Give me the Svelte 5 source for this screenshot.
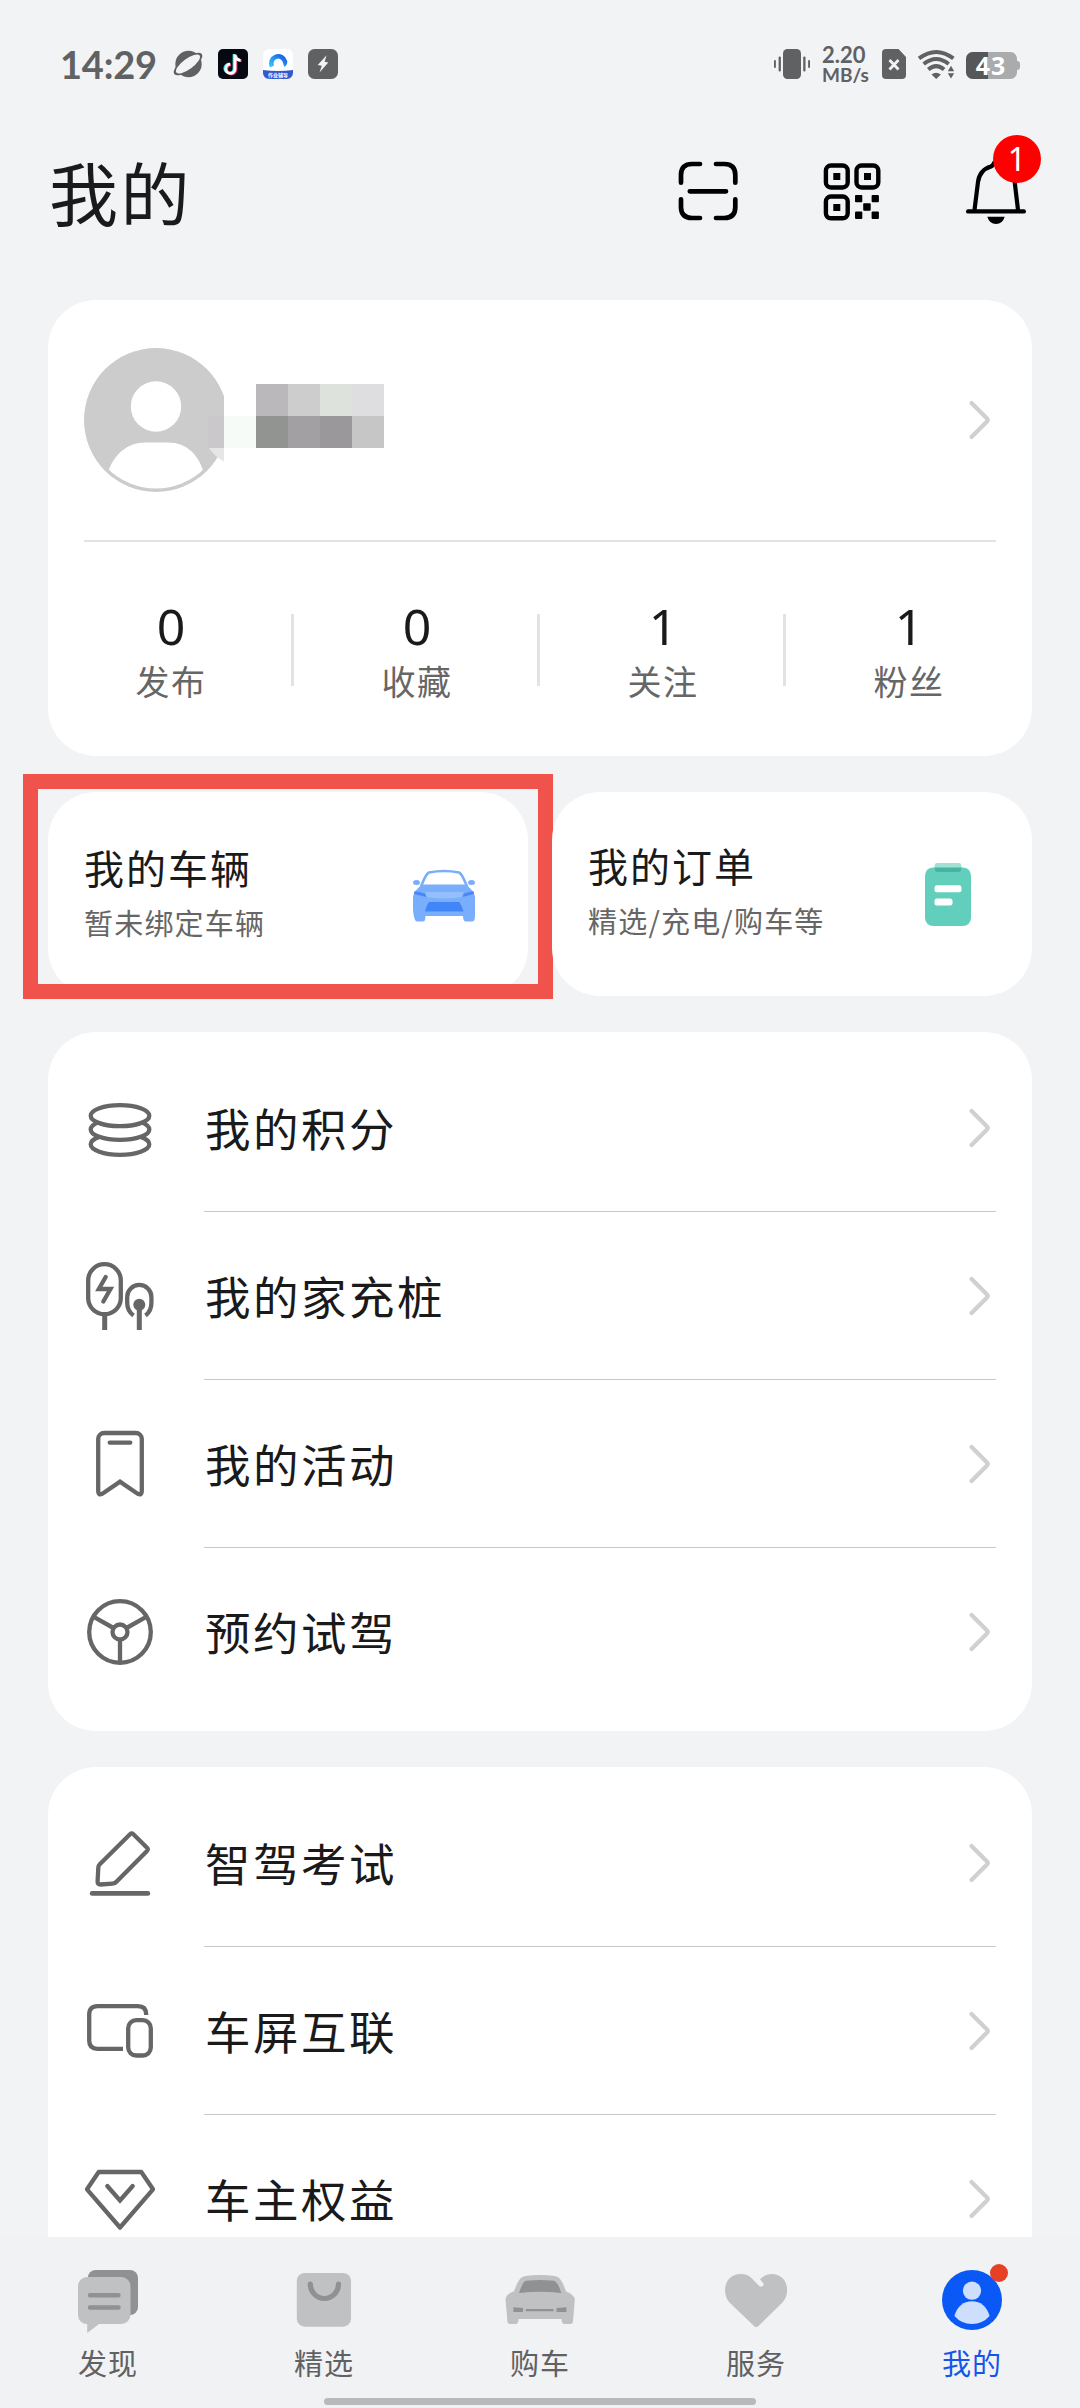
<script>
  const stats = [
    { value: '0', label: '发布' },
    { value: '0', label: '收藏' },
    { value: '1', label: '关注' },
    { value: '1', label: '粉丝' },
  ];

  const groups = [
    [
      { icon: 'coins', label: '我的积分' },
      { icon: 'charger', label: '我的家充桩' },
      { icon: 'bookmark', label: '我的活动' },
      { icon: 'wheel', label: '预约试驾' },
    ],
    [
      { icon: 'edit', label: '智驾考试' },
      { icon: 'screens', label: '车屏互联' },
      { icon: 'diamond', label: '车主权益' },
    ],
  ];

  const tabs = [
    { icon: 'discover', label: '发现' },
    { icon: 'shop', label: '精选' },
    { icon: 'car', label: '购车' },
    { icon: 'heart', label: '服务' },
    { icon: 'me', label: '我的', active: true },
  ];
</script>

{#snippet chevron()}
  <svg class="chevron" viewBox="0 0 24 42" width="24" height="42">
    <path d="M4.5 4 L20 19.6 Q21.4 21 20 22.4 L4.5 38" />
  </svg>
{/snippet}

<div class="app">
  <div class="status">
    <span class="time">14:29</span>
    <div class="notes">
      <svg viewBox="0 0 30 30" width="30" height="30">
        <circle cx="15.5" cy="15" r="13.2" fill="#5f6163" />
        <ellipse cx="15" cy="15" rx="17" ry="6.6" transform="rotate(-36 15 15)" fill="#5f6163" />
        <ellipse cx="15" cy="15" rx="14.4" ry="5.2" transform="rotate(-36 15 15)" fill="#f1f3f5" />
      </svg>
      <svg viewBox="0 0 30 30" width="30" height="30">
        <rect width="30" height="30" rx="5" fill="#060812" />
        <g fill="none" stroke-width="2.8">
          <path d="M16 5 V19.5 A4.6 4.6 0 1 1 11.4 14.8 M16 5.5 Q17 10.5 21.6 10.8" stroke="#25e8e2" />
          <path d="M18 6.2 V20.6 A4.6 4.6 0 1 1 13 15.8 M18 6.7 Q19 11.5 23.6 11.8" stroke="#f0275a" />
          <path d="M17 5.5 V20 A4.6 4.6 0 1 1 12.2 15.2 M17 6 Q18 11 22.6 11.3" stroke="#fff" />
        </g>
      </svg>
      <svg viewBox="0 0 30 30" width="30" height="30">
        <defs>
          <linearGradient id="ring" x1="0" y1="1" x2="1" y2="0">
            <stop offset="0" stop-color="#35c5fb" />
            <stop offset="1" stop-color="#165fe8" />
          </linearGradient>
        </defs>
        <rect width="30" height="30" rx="6" fill="#fff" />
        <path d="M9 17.5 A7 7 0 1 1 22 12.5 Q22 15 20.5 15.5" fill="none" stroke="url(#ring)" stroke-width="4.6" />
        <path d="M0 21 Q15 23 30 21 V24 a6 6 0 0 1 -6 6 H6 a6 6 0 0 1 -6 -6 Z" fill="#3557cf" />
        <text x="15" y="28.4" text-anchor="middle" class="tiny">作业辅导</text>
      </svg>
      <svg viewBox="0 0 30 30" width="30" height="30">
        <rect width="30" height="30" rx="6.5" fill="#5f6163" />
        <path d="M18.6 6.2 L9.7 16 L13.8 16.8 L11.5 23.5 L20.3 13.6 L16.6 12.8 Z" fill="#f1f3f5" />
      </svg>
    </div>
    <div class="signals">
      <svg viewBox="0 0 36 30" width="36" height="30" fill="#5f6163">
        <rect x="9" width="18" height="30" rx="4.5" />
        <rect x="0" y="11" width="1.9" height="8" rx=".9" /><rect x="4.6" y="7.5" width="2.3" height="15" rx="1" />
        <rect x="29.2" y="7.5" width="2.3" height="15" rx="1" /><rect x="34.1" y="11" width="1.9" height="8" rx=".9" />
      </svg>
      <div class="speed"><span class="rate">2.20</span><span class="unit">MB/s</span></div>
      <svg class="sim" viewBox="0 0 24 30" width="24" height="30">
        <path d="M4 0 H16.5 L24 8 V26 a4 4 0 0 1 -4 4 H4 a4 4 0 0 1 -4 -4 V4 a4 4 0 0 1 4 -4Z" fill="#5f6163" />
        <path d="M7.5 11 L16.5 20.5 M16.5 11 L7.5 20.5" stroke="#f1f3f5" stroke-width="2.8" />
      </svg>
      <svg class="wifi" viewBox="0 0 37 30" width="37" height="30">
        <g fill="none" stroke="#5f6163" stroke-width="4">
          <path d="M1 9.4 Q18.2 -3.5 35.4 9.400" />
          <path d="M5.7 15 Q18.2 5 30.7 15" />
          <path d="M10.3 20.5 Q18.2 13.8 26.1 20.5" />
        </g>
        <path d="M13.5 25.4 Q18 22.2 22.9 25.4 L18.2 30 Z M29.8 22.3 L33 16.8 L36.2 22.3 Z M29.8 24.3 L33 29.6 L36.2 24.3 Z" fill="#5f6163" />
      </svg>
      <div class="battery">
        <svg viewBox="0 0 54 27" width="54" height="27">
          <path d="M22 0 H44.5 a6.5 6.5 0 0 1 6.5 6.5 V9 q3 0 3 3 v3 q0 3 -3 3 V20.500 a6.500 6.500 0 0 1 -6.500 6.500 H22 Z" fill="#a9abad" />
          <path d="M6.500 0 H22 V27 H6.500 a6.500 6.500 0 0 1 -6.500 -6.500 V6.500 a6.500 6.500 0 0 1 6.500 -6.500Z" fill="#555759" />
        </svg>
        <span class="level">43</span>
      </div>
    </div>
  </div>

  <header>
    <h1>我的</h1>
    <div class="actions">
      <svg viewBox="0 0 72 72" width="72" height="72" class="line">
        <path d="M9 26.700 V19 Q9 8 20 8 H28 M44 8 H52.300 Q63.300 8 63.300 19 V26.700 M63.300 43.300 V51 Q63.300 62 52.300 62 H44 M28 62 H20 Q9 62 9 51 V43.300 M17.800 35.300 H54" />
      </svg>
      <svg viewBox="0 0 72 72" width="72" height="72">
        <g fill="none" stroke="#000" stroke-width="4.400">
          <rect x="9.900" y="9.500" width="21.800" height="22" rx="5" />
          <rect x="40.500" y="9.500" width="21.800" height="22" rx="5" />
          <rect x="9.900" y="40.500" width="21.800" height="21.800" rx="5" />
        </g>
        <rect x="17.300" y="17" width="7" height="7" /><rect x="48" y="17" width="7" height="7" /><rect x="17.300" y="48" width="7" height="7" />
        <rect x="39" y="39" width="7.300" height="7.300" rx="1" /><rect x="55.600" y="39" width="7.300" height="7.300" rx="1" />
        <rect x="47.200" y="47.200" width="7.500" height="7.500" rx="1" />
        <rect x="39" y="55.500" width="7.300" height="7.500" rx="1" /><rect x="55.600" y="55.500" width="7.300" height="7.500" rx="1" />
      </svg>
      <div class="bell">
        <svg viewBox="0 0 72 72" width="72" height="72">
          <path d="M14.500 54 L18 26 Q19.500 14 31 10.500 Q33 9.500 34 7 Q36 4 38.500 7 Q40 9.500 42 10.500 Q53 14 54.700 26 L58 54" fill="none" stroke="#000" stroke-width="4.200" />
          <path d="M8.200 55.400 H63.800" stroke="#000" stroke-width="4.400" stroke-linecap="round" />
          <path d="M27.300 60.700 H44.700 Q42.500 68 36 68 Q29.500 68 27.300 60.700Z" />
        </svg>
        <span class="count">1</span>
      </div>
    </div>
  </header>

  <main>
    <section class="card profile">
      <div class="user">
        <svg class="avatar" viewBox="0 0 144 144" width="144" height="144">
          <defs>
            <clipPath id="face"><rect width="140" height="144" /></clipPath>
            <clipPath id="inner"><circle cx="72" cy="72" r="68.500" /></clipPath>
          </defs>
          <g clip-path="url(#face)">
            <circle cx="72" cy="72" r="72" fill="#ccc" />
            <rect x="124" y="68" width="16" height="32" fill="#cbc8cc" />
            <circle cx="72" cy="58.500" r="25.200" fill="#fff" />
            <path d="M24 124 C30 106 44 94.500 61 94.500 H84 C102 94.500 114 106 119.500 124 L110 144 H34Z" fill="#fff" clip-path="url(#inner)" />
            <path d="M125 100 H140 V113.500 Q131 109 125 100Z" fill="#e6e6e6" />
          </g>
        </svg>
        <!-- pixelated user name -->
        <svg class="mosaic" viewBox="0 0 160 64" width="160" height="64" shape-rendering="crispEdges">
          <rect x="0" y="32" width="32" height="32" fill="#f6fbf8" />
          <rect x="32" y="0" width="32" height="32" fill="#bab8bb" />
          <rect x="64" y="0" width="32" height="32" fill="#cecdce" />
          <rect x="96" y="0" width="32" height="32" fill="#dde2dc" />
          <rect x="128" y="0" width="32" height="32" fill="#dedddf" />
          <rect x="32" y="32" width="32" height="32" fill="#929491" />
          <rect x="64" y="32" width="32" height="32" fill="#a3a0a4" />
          <rect x="96" y="32" width="32" height="32" fill="#9b989b" />
          <rect x="128" y="32" width="32" height="32" fill="#c6c6c6" />
        </svg>
        {@render chevron()}
      </div>
      <div class="stats">
        {#each stats as s}
          <div class="stat">
            <span class="num">{s.value}</span>
            <span class="name">{s.label}</span>
          </div>
        {/each}
      </div>
    </section>

    <div class="pair">
      <section class="card tile first">
        <div class="words">
          <strong>我的车辆</strong>
          <small>暂未绑定车辆</small>
        </div>
        <svg class="vehicle" viewBox="0 0 62 52" width="62" height="52">
          <path d="M8 16.500 Q13 3.500 16 2.500 Q31 -0.500 46 2.500 Q49 3.500 54 16.500" fill="none" stroke="#7aaefb" stroke-width="2.600" />
          <ellipse cx="3.500" cy="12.500" rx="3.500" ry="2.500" fill="#7aaefb" /><ellipse cx="58.500" cy="12.500" rx="3.500" ry="2.500" fill="#7aaefb" />
          <path d="M9 14.500 H53 Q62 22 62 27 V46 Q62 51.500 59 51.500 H53 Q50 51.500 50 46 H12.500 Q12.500 51.500 10 51.500 H4 Q1 51.500 0 40 V27 Q0 22 9 14.500Z" fill="#79aefc" />
          <path d="M12 22 H50.500 L49 27 Q31 30 13.500 27Z" fill="#93bffd" />
          <path d="M1.500 21 L12 23.500 L13.500 27 L1 24Z M60.500 21 L51 23.500 L49.500 27 L61 24Z" fill="#4a86f5" />
          <path d="M16 32 H46.500 Q49 36 50.500 41.500 H12 Q13.500 35 16 32Z" fill="#4285f7" />
        </svg>
        <div class="frame"></div>
      </section>
      <section class="card tile second">
        <div class="words">
          <strong>我的订单</strong>
          <small>精选/充电/购车等</small>
        </div>
        <svg viewBox="0 0 46 63" width="46" height="63">
          <rect y="4.500" width="46" height="58.500" rx="8" fill="#62cfbc" />
          <rect x="9.500" y="0" width="27" height="9" rx="3" fill="#a3e0d4" />
          <path d="M9.500 4.500 H36.500 V6 a3 3 0 0 1 -3 3 H12.500 a3 3 0 0 1 -3 -3Z" fill="#45b5a1" />
          <rect x="9.500" y="22.300" width="27" height="7" rx="2.500" fill="#fff" />
          <rect x="9.500" y="35.500" width="18" height="7" rx="2.500" fill="#fff" />
        </svg>
      </section>
    </div>

    {#each groups as rows}
      <section class="card list">
        {#each rows as row}
          <div class="row">
            <svg class="glyph" viewBox="0 0 72 72" width="72" height="72">
              {#if row.icon === 'coins'}
                <g fill="#fff">
                  <ellipse cx="36" cy="52.300" rx="29.300" ry="10.500" />
                  <ellipse cx="36" cy="37.400" rx="29.300" ry="10.500" />
                  <ellipse cx="36" cy="23.700" rx="29.300" ry="10.500" />
                </g>
              {:else if row.icon === 'charger'}
                <rect x="4.200" y="4.200" width="32.600" height="50" rx="16.300" />
                <path d="M21.700 17 L14.800 29 H26.500 L19.300 41.500" stroke-linecap="round" />
                <path d="M20.700 55 V70 M55.300 45 V70" stroke-width="5" />
                <path d="M49.500 55.500 C45.500 52.500 43.200 48 43.200 43 V37 A12.100 12.100 0 0 1 67.400 37 V43 C67.400 48 65.500 52.500 61.500 55.500" />
                <circle cx="55.300" cy="44.800" r="6" fill="#666" stroke="none" />
              {:else if row.icon === 'bookmark'}
                <path d="M14.200 11 a6 6 0 0 1 6 -6 H51.800 a6 6 0 0 1 6 6 V63 q0 5 -4.200 2.700 L36 53.700 L18.400 65.700 q-4.200 2.300 -4.200 -2.700Z" />
                <path d="M25.700 14.700 H46.300" stroke-linecap="round" />
              {:else if row.icon === 'wheel'}
                <circle cx="36" cy="36" r="30.800" />
                <circle cx="36" cy="36" r="7.500" />
                <path d="M36 43.500 V66 M9.300 20.700 L29.500 32 M62.700 20.700 L42.500 32" />
              {:else if row.icon === 'edit'}
                <path d="M46 7.300 Q47.700 5.700 49.400 7.300 L63 20.700 Q64.500 22.300 63 23.900 L32.700 54.500 Q31 56.500 28.500 56.700 L16.500 57.500 Q13.600 57.500 13.600 54.500 L14.300 40.500 Q14.300 38.700 16 37Z" />
                <path d="M8.200 66.400 H63.800" stroke-width="4.800" stroke-linecap="round" />
              {:else if row.icon === 'screens'}
                <path d="M62.200 20 V19.500 q0 -8.300 -8.300 -8.300 H13.500 q-8.300 0 -8.300 8.300 V45.600 q0 8.300 8.300 8.300 H39" />
                <rect x="44.200" y="25.200" width="22.600" height="35.300" rx="8" />
              {:else}
                <path d="M14.700 9 H57.300 L69 26.300 L36 64.500 L3 26.300Z" stroke-linejoin="round" />
                <path d="M23.300 23 L36 37.500 L48.700 23" stroke-linecap="round" />
              {/if}
            </svg>
            <div class="body">
              <span>{row.label}</span>
              {@render chevron()}
            </div>
          </div>
        {/each}
      </section>
    {/each}
  </main>

  <nav>
    {#each tabs as tab}
      <div class="tab" class:active={tab.active}>
        <svg viewBox="0 0 72 72" width="72" height="72">
          {#if tab.icon === 'discover'}
            <rect x="15.800" y="6" width="50.200" height="45" rx="8" fill="#8f9193" />
            <path d="M15 13 H49.500 a9 9 0 0 1 9 9 V51 a9 9 0 0 1 -9 9 H27 L15.200 69 V60 a9 9 0 0 1 -9.200 -9 V22 a9 9 0 0 1 9 -9Z" fill="#bfc1c3" />
            <path d="M18 31.300 H46.500 M18 43.500 H46.500" stroke="#8f9193" stroke-width="4.400" stroke-linecap="round" />
          {:else if tab.icon === 'shop'}
            <rect x="8.800" y="9" width="54.200" height="53.700" rx="8" fill="#bfc1c3" />
            <path d="M22.300 20 a14.100 14.500 0 0 0 28.200 0" fill="none" stroke="#8f9193" stroke-width="5.200" stroke-linecap="round" />
          {:else if tab.icon === 'car'}
            <path d="M10 27.300 Q14 16 17.500 13.500 Q20 11 36 11 Q52 11 54.500 13.500 Q58 16 62 27.300 Q70.800 31 70.800 36 L69 57 Q69 60 66.500 60 H60.500 Q57.500 60 57.500 55 H14.600 Q14.600 60 11.500 60 H6 Q3.500 60 3.400 57 L1.500 36 Q1.500 30 10 27.300Z" fill="#bfc1c3" />
            <path d="M15 29 Q18 20 20.500 17.500 Q22 16 36 16 Q50 16 51.500 17.500 Q54.500 20 57.300 29 Q36 26.500 15 29Z" fill="#8f9193" />
            <path d="M9.400 43.300 L19 44 V48 H9.400Z M62.400 43.300 L52.500 44 V48 H62.400Z M21.800 45 H49.500 V47.300 H21.800Z" fill="#8f9193" />
          {:else if tab.icon === 'heart'}
            <path d="M33.500 61.500 L9.500 38.500 C1.500 30 3.800 10 20.800 10 C25.500 10 29 11.500 31.500 14 L39 21.800 C41.500 24.300 45.300 21 43 18.700 L40 15.500 C43 12 47 10 51.500 10 C68 10 71 29 62.500 38.500 L39 61.500 Q36.200 64.500 33.500 61.500Z" fill="#bfc1c3" />
          {:else}
            <circle cx="36" cy="36" r="30" fill="#0a59f7" />
            <circle cx="36" cy="26.700" r="9.100" fill="#cedefd" />
            <path d="M18.400 52 Q23 37.300 36 37.300 Q49 37.300 53.600 52 Q46.500 60 36 60 Q25.500 60 18.400 52Z" fill="#cedefd" />
          {/if}
        </svg>
        {#if tab.active}<i class="dot"></i>{/if}
        <span>{tab.label}</span>
      </div>
    {/each}
    <div class="home"></div>
  </nav>
</div>

<style>
  :global(body) { background: #f1f3f5; }
  .app {
    width: 1080px; height: 2408px; overflow: hidden; position: relative;
    display: flex; flex-direction: column; background: #f1f3f5; color: #1a1a1a;
    font-family: 'Noto Sans CJK SC', sans-serif;
  }
  svg { display: block; flex: none; overflow: visible; }

  .status { height: 128px; flex: none; display: flex; align-items: center; padding: 0 60px; box-sizing: border-box; color: #5f6163; }
  .time { font: 700 38px/40px Lato, sans-serif; width: 113px; letter-spacing: -.2px; }
  .notes { display: flex; gap: 15px; }
  .tiny { font-size: 5px; fill: #fff; font-weight: 700; }
  .signals { display: flex; align-items: center; margin-left: auto; }
  .speed { display: flex; flex-direction: column; margin-left: 12px; width: 60px; font-family: Lato, sans-serif; font-weight: 700; }
  .rate { font-size: 22px; line-height: 21px; }
  .unit { font-size: 19px; line-height: 19px; }
  .wifi { margin-left: 12px; }
  .battery { margin-left: 11px; display: grid; align-items: center; padding-top: 3px; }
  .battery svg, .level { grid-area: 1 / 1; }
  .level { width: 50px; text-align: center; color: #fff; font: 700 25px/27px 'Noto Sans', sans-serif; letter-spacing: 1px; }

  header { height: 128px; flex: none; display: flex; align-items: center; justify-content: space-between; padding: 0 48px 0 49px; }
  h1 { margin: -3px 0 0; font-size: 69px; font-weight: 400; line-height: 80px; letter-spacing: 2.500px; }
  .actions { display: flex; gap: 72px; }
  .line { fill: none; stroke: #000; stroke-width: 4.700; stroke-linecap: round; }
  .bell { position: relative; }
  .count {
    position: absolute; left: 33px; top: -21px; width: 48px; height: 48px; border-radius: 50%;
    background: #f00; color: #fff; text-align: center; font: 400 32px/48px 'Noto Sans', sans-serif;
  }

  main { flex: 1; min-height: 0; overflow: hidden; padding: 44px 48px 0; display: flex; flex-direction: column; gap: 36px; }
  .card { background: #fff; border-radius: 48px; flex: none; }

  .profile { height: 456px; }
  .user { margin: 0 36px; height: 240px; border-bottom: 2px solid #e3e3e3; display: flex; align-items: center; }
  .mosaic { margin: -8px 0 0 -4px; }
  .chevron { margin-left: auto; margin-right: 5px; fill: none; stroke: #d0d0d0; stroke-width: 4.200; stroke-linecap: round; }
  .stats { display: grid; grid-template-columns: repeat(4, 1fr); padding-top: 57px; }
  .stat { display: flex; flex-direction: column; align-items: center; position: relative; }
  .stat + .stat::before { content: ''; position: absolute; left: -3px; top: 15px; width: 3px; height: 72px; background: #e3e3e3; }
  .num { font: 400 50px/54px 'Noto Sans', sans-serif; }
  .name { font-size: 34px; line-height: 44px; letter-spacing: 1.500px; color: #666; margin-top: 6px; }

  .pair { display: grid; grid-template-columns: 480px 480px; gap: 24px; }
  .tile { height: 204px; box-sizing: border-box; display: flex; align-items: center; justify-content: space-between; position: relative; }
  .first { padding: 0 53px 0 36px; }
  .second { padding: 0 61px 0 36px; }
  .words { display: flex; flex-direction: column; }
  .first .words { padding-top: 3px; }
  .second .words { padding-bottom: 1px; }
  .words strong { font-size: 40px; font-weight: 400; line-height: 54px; letter-spacing: 2px; }
  .words small { font-size: 29px; line-height: 57px; letter-spacing: 1.200px; color: #666; }
  .vehicle { margin-top: 4px; }
  .frame { position: absolute; left: -25.500px; top: -18.500px; width: 500px; height: 195px; border: 15px solid #f0534b; }

  .list { padding: 12px 36px 15px; }
  .row { height: 168px; display: flex; align-items: center; gap: 48px; }
  .glyph { fill: none; stroke: #666; stroke-width: 4.300; }
  .body { flex: 1; height: 167px; display: flex; align-items: center; border-bottom: 1px solid #c8c8c8; font-size: 45.500px; letter-spacing: 2.500px; }
  .body span { padding-left: 1px; margin-top: -1px; }
  .row:last-child .body { border-color: transparent; }

  nav { height: 171px; flex: none; display: flex; background: #f1f2f4; position: relative; }
  .tab { width: 216px; display: flex; flex-direction: column; align-items: center; padding-top: 27px; position: relative; }
  .tab span { font-size: 29px; line-height: 40px; margin-top: 6px; letter-spacing: 1px; color: #5f6163; }
  .tab.active span { color: #1456ea; }
  .dot { position: absolute; left: 126px; top: 27px; width: 18px; height: 18px; border-radius: 50%; background: #e84026; }
  .home { position: absolute; left: 324px; bottom: 3px; width: 432px; height: 7px; border-radius: 4px; background: #b7b9bb; }
</style>
